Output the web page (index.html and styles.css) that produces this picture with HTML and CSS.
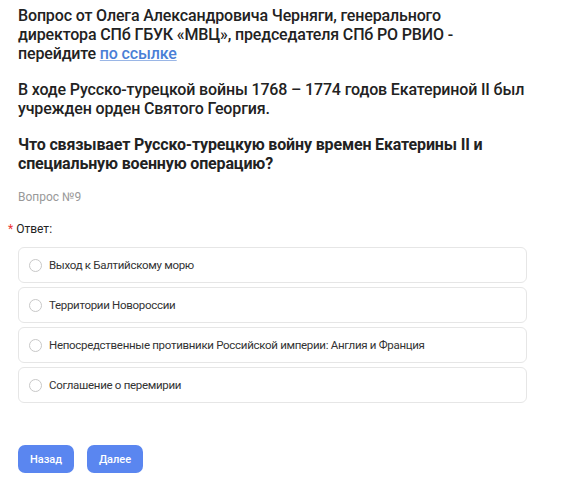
FILE: index.html
```html
<!DOCTYPE html>
<html lang="ru">
<head>
<meta charset="utf-8">
<link rel="stylesheet" href="styles.css">
</head>
<body>
<div class="page">
  <div class="intro">
    <p class="p1">Вопрос от Олега Александровича Черняги, генерального директора СПб ГБУК «МВЦ», председателя СПб РО РВИО - перейдите <a href="#">по ссылке</a></p>
    <p class="p2">В ходе Русско-турецкой войны 1768 – 1774 годов Екатериной II был учрежден орден Святого Георгия.</p>
    <p class="p3">Что связывает Русско-турецкую войну времен Екатерины II и специальную военную операцию?</p>
  </div>
  <div class="qnum">Вопрос №9</div>
  <div class="label"><span class="req">*</span>Ответ:</div>
  <div class="options">
    <label class="opt"><span class="radio"></span>Выход к Балтийскому морю</label>
    <label class="opt"><span class="radio"></span>Территории Новороссии</label>
    <label class="opt"><span class="radio"></span>Непосредственные противники Российской империи: Англия и Франция</label>
    <label class="opt"><span class="radio"></span>Соглашение о перемирии</label>
  </div>
  <div class="buttons">
    <button class="btn">Назад</button>
    <button class="btn">Далее</button>
  </div>
</div>
</body>
</html>
```
FILE: styles.css
```css
* { box-sizing: border-box; }
html, body { margin: 0; padding: 0; background: #fff; }
body { font-family: "Roboto", "Liberation Sans", sans-serif; color: #222; }
.page { padding: 6px 20px 0 18px; }
.intro p { margin: 0; font-size: 16px; line-height: 19px; font-weight: 500; letter-spacing: -0.15px; }
.intro .p1 { margin-bottom: 17px; max-width: 465px; }
.intro .p2 { margin-bottom: 17px; }
.intro .p3 { font-weight: 700; }
.intro a { color: #4a7fd6; text-decoration: underline; text-decoration-color: #9ab6e6; }
.qnum { margin-top: 16px; font-size: 12px; color: #999; line-height: 16px; }
.label { margin-top: 16px; margin-left: -10px; font-size: 12px; line-height: 16px; color: #222; }
.req { color: #e33; margin-right: 3px; }
.options { margin-top: 10px; margin-right: 18px; display: flex; flex-direction: column; gap: 4px; }
.opt { display: flex; align-items: center; height: 36px; border: 1px solid #e6e6e6; border-radius: 6px; padding-left: 10px; font-size: 11.5px; letter-spacing: -0.3px; color: #333; }
.radio { width: 13px; height: 13px; border-radius: 50%; border: 1px solid #c8c8c8; margin-right: 7px; flex: none; }
.buttons { margin-top: 42px; display: flex; gap: 13px; }
.btn { width: 56px; height: 28px; border: none; border-radius: 7px; background: #5a86f0; color: #fff; font-family: inherit; font-size: 11px; font-weight: 500; padding: 0; }
```
